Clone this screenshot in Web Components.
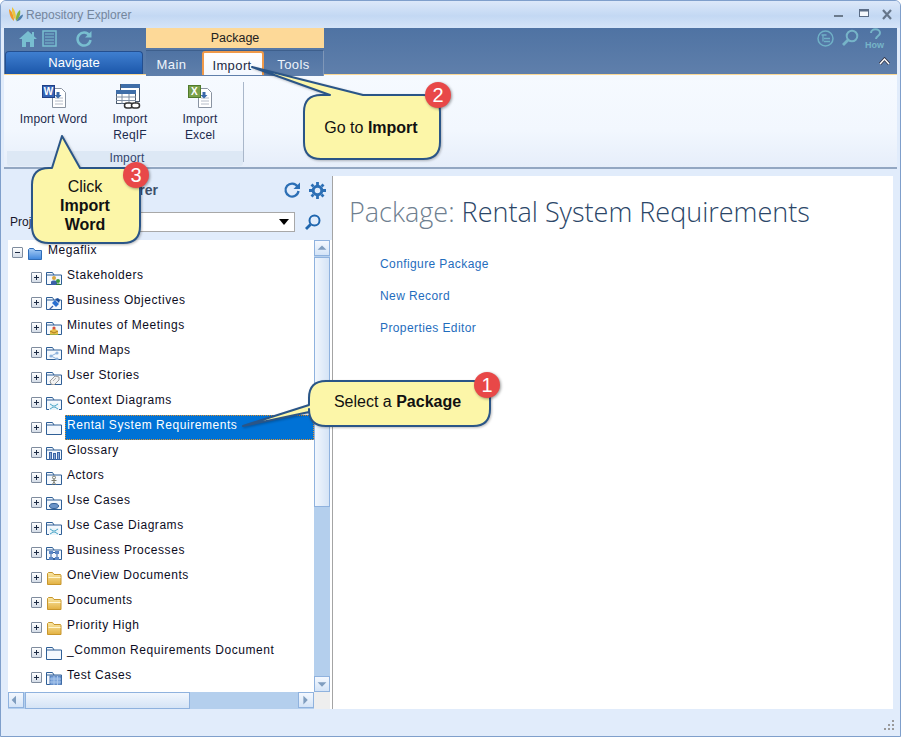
<!DOCTYPE html>
<html>
<head>
<meta charset="utf-8">
<title>Repository Explorer</title>
<style>
  html, body { margin: 0; padding: 0; background: #fff; }
  body { font-family: "Liberation Sans", Arial, sans-serif; font-size: 12px; }
</style>
</head>
<body>
<app-window>
  <title-bar></title-bar>
  <ribbon-header></ribbon-header>
  <ribbon-panel></ribbon-panel>
  <main-area>
    <explorer-pane slot="left"></explorer-pane>
    <package-page slot="right"></package-page>
  </main-area>
  <status-strip></status-strip>
  <call-out x="309" y="381" w="181" h="45" side="left" a="24" b="31" tx="243" ty="426" bx="165" by="-9" pad="0 4px 4px 0" n="1">Select a <b>Package</b></call-out>
  <call-out x="304" y="95" w="136" h="64" side="top" a="26" b="59" tx="252" ty="67" bx="121" by="-13" pad="0 2px 0 0" n="2">Go to <b>Import</b></call-out>
  <call-out x="32" y="168" w="108" h="75" side="top" a="20" b="48" tx="62" ty="136" bx="91" by="-6" pad="0 2px 0 0" n="3">Click<br><b>Import<br>Word</b></call-out>
</app-window>

<script>
/* Small glyphs drawn on a 16x16 grid, placed over the folder outline */
const FOLDER_GLYPHS = {
  people: '<circle cx="8" cy="8" r="2" fill="#d9a63c"/><path d="M5 15v-3c0-2 6-2 6 0v3z" fill="#3b5fa8"/><circle cx="12" cy="11" r="2" fill="#3c9a3c"/><path d="M10 15c0-2 4-2 5 0z" fill="#2f7d2f"/>',
  pin: '<path d="M3 15l4-4" stroke="#3b5fa8" stroke-width="1.2"/><path d="M6 8l3-3 4 4-3 3z" fill="#2a6fd0"/><path d="M9 4l3-1 2 2-1 3z" fill="#1d4f9c"/>',
  mail: '<path d="M4 15v-4l4-3 4 3v4z" fill="#e8c04a"/><path d="M4 11l4 2 4-2" stroke="#a87a20" fill="none"/><circle cx="8" cy="8" r="1.6" fill="#d8503c"/><path d="M3 15h10" stroke="#5a9a3c"/>',
  mind: '<circle cx="5" cy="11" r="1.6" fill="#8fb3dd"/><circle cx="11" cy="8" r="1.6" fill="#8fb3dd"/><circle cx="11" cy="14" r="1.6" fill="#8fb3dd"/><path d="M5 11l6-3M5 11l6 3" stroke="#8fb3dd"/>',
  story: '<path d="M5 14l-1-3 5-5 4 1 0 3-5 5z" fill="#f2f2f2" stroke="#9a9a9a"/><path d="M7 11l3-3" stroke="#b0b0b0"/>',
  context: '<path d="M3 8h10v7H3z" fill="#eaf4fa"/><path d="M4 9l8 5M12 9l-8 5" stroke="#4aa6c8"/><circle cx="8" cy="11.500" r="1.500" fill="#8cc6dc"/>',
  glossary: '<path d="M3 7h3v8H3zM7 8h3v7H7zM11 7h3v8h-3z" fill="#3b64a6"/><path d="M4.500 8v6M8.500 9v5M12.500 8v6" stroke="#8aa8d4"/>',
  actor: '<circle cx="8" cy="7.500" r="1.500" fill="none" stroke="#7a7a6a"/><path d="M8 9v3M5.500 10.500h5M8 12l-2 3M8 12l2 3" stroke="#7a7a6a" fill="none"/>',
  usecase: '<ellipse cx="8" cy="11" rx="4.500" ry="2.500" fill="#6b94c8" stroke="#2f5d96"/>',
  process: '<rect x="3" y="6" width="4" height="3" fill="#5b86c4"/><rect x="9" y="6" width="4" height="3" fill="#5b86c4"/><rect x="3" y="12" width="4" height="3" fill="#5b86c4"/><rect x="9" y="12" width="4" height="3" fill="#5b86c4"/><path d="M5 9v3M11 9v3M7 7.500h2M7 13.500h2" stroke="#2f5d96"/>',
  test: '<rect x="4" y="6" width="11" height="9" fill="#7ea6dc" stroke="#4f79b4"/><path d="M4 9h11M4 12h11M8 6v9M11.500 6v9" stroke="#a9c6ea"/>'
};

class FolderIcon extends HTMLElement {
  connectedCallback() {
    const kind = this.getAttribute('kind') || '';
    let art;
    if (kind === 'yellow') {
      art = `<defs><linearGradient id="y" x1="0" y1="0" x2="0" y2="1"><stop offset="0" stop-color="#fbe9a8"/><stop offset="1" stop-color="#e2b040"/></linearGradient></defs>
        <path d="M1.500 14.500v-11l1-1h4l1.500 2h6.500l.5 1v9z" fill="url(#y)" stroke="#c8962c"/>
        <path d="M2.500 7.500h12" stroke="#fff6d0"/>`;
    } else if (kind === 'root') {
      art = `<defs><linearGradient id="b" x1="0" y1="0" x2="0" y2="1"><stop offset="0" stop-color="#a9cdf5"/><stop offset="1" stop-color="#3f86dd"/></linearGradient></defs>
        <path d="M1.500 14.500v-10l1-1h4l1.500 2h6.500v9z" fill="url(#b)" stroke="#2f6cb8"/>`;
    } else {
      art = `<path d="M.500 14.500v-12h6l1.500 2.500h7.500v9.500z" fill="#f4f8fd" stroke="#2f5f96"/>
        <path d="M.500 5h7.500" stroke="#2f5f96"/>${FOLDER_GLYPHS[kind] || ''}`;
    }
    this.attachShadow({ mode: 'open' }).innerHTML = `
      <style>:host { display: block; width: 16px; height: 15px; } svg { display: block; }</style>
      <svg width="16" height="15" viewBox="0 0 16 15">${art}</svg>`;
  }
}
customElements.define('folder-icon', FolderIcon);

class AppWindow extends HTMLElement {
  constructor() {
    super();
    this.attachShadow({ mode: 'open' }).innerHTML = `
      <style>
        :host {
          display: flex; flex-direction: column; position: relative; box-sizing: border-box;
          width: 901px; height: 737px; padding: 0 3px 1px; overflow: hidden;
          background: #e1ecfb; border: 1px solid #7f9fcb; border-radius: 6px 6px 0 0;
          font-family: "Liberation Sans", Arial, sans-serif;
        }
      </style>
      <slot></slot>`;
  }
}
customElements.define('app-window', AppWindow);

class TitleBar extends HTMLElement {
  constructor() {
    super();
    this.attachShadow({ mode: 'open' }).innerHTML = `
      <style>
        :host {
          display: flex; align-items: center; height: 27px; flex: none; margin: 0 -3px; padding: 0 4px 0 7px;
          background: linear-gradient(#dce8f9, #c3d8f3 55%, #d5e4f8); color: #74869d; font-size: 12px;
        }
        .name { margin-left: 2px; flex: 1; }
        .btn { display: block; margin-left: 8px; }
        .up { position: relative; top: -2px; }
      </style>
      <svg width="16" height="17" viewBox="0 0 16 17">
        <path d="M1 3c0 5 2 10 5 12 0-5-2-10-5-12z" fill="#f0982c"/>
        <path d="M4 1c-.5 5 1 10 3.500 13 1-5-.5-10-3.500-13z" fill="#eec43c"/>
        <path d="M8 15c-.5-4 1-9 4-11 1 4-1 9-4 11z" fill="#84b23c"/>
        <path d="M8.500 15.500c1-3 3.500-6 6.500-7 0 3-3 6-6.500 7z" fill="#4f7fae"/>
      </svg>
      <span class="name">Repository Explorer</span>
      <svg class="btn up" width="16" height="16" viewBox="0 0 16 16"><path d="M2 11h9" stroke="#6b7a8c" stroke-width="2"/></svg>
      <svg class="btn up" width="16" height="16" viewBox="0 0 16 16"><rect x="3.500" y="4.500" width="9" height="7" fill="#f4f8fd" stroke="#5a6c86"/><path d="M3 5.500h10" stroke="#5a6c86" stroke-width="2"/></svg>
      <svg class="btn" width="16" height="16" viewBox="0 0 16 16"><path d="M3 3l8 9M11 3l-8 9" stroke="#66768a" stroke-width="2.200"/></svg>`;
  }
}
customElements.define('title-bar', TitleBar);

class RibbonHeader extends HTMLElement {
  constructor() {
    super();
    this.attachShadow({ mode: 'open' }).innerHTML = `
      <style>
        :host {
          display: flex; height: 47px; flex: none; box-sizing: border-box; position: relative;
          background: linear-gradient(#4f73a3, #5f7fab); border-bottom: 1px solid #fbd894;
          font-size: 12px;
        }
        .nav-side { width: 142px; display: flex; flex-direction: column; }
        .quick { height: 23px; display: flex; align-items: center; padding: 0 0 2px 15px; box-sizing: border-box; gap: 5px; }
        .quick svg:last-child { margin-left: 12px; }
        .navigate {
          height: 23px; margin: 0 3px 0 1px; box-sizing: border-box; text-align: center; line-height: 21px;
          background: linear-gradient(#3f7fd0, #1c57aa); border: 1px solid #244f8f; border-bottom: 0;
          border-radius: 4px 4px 0 0; color: #fff; font-size: 13px;
        }
        .context { width: 178px; display: flex; flex-direction: column; }
        .context-title {
          height: 20px; background: #fdd998; color: #222; text-align: center; line-height: 20px; font-size: 12.500px;
        }
        .tabs { display: flex; flex: 1; padding-left: 1px; border-right: 1px solid #7f97b8; background: linear-gradient(#4f73a3, #5f7fab); margin-top: 2px; border-top: 1px solid #3e5f8c; font-size: 13px; letter-spacing: .4px; }
        .tab { color: #eef4fb; text-align: center; line-height: 22px; padding-top: 3px; box-sizing: border-box; }
        .tab.main { width: 55px; padding-right: 6px; }
        .tab.tools { width: 59px; }
        .tab.active {
          width: 62px; color: #1c2a44; background: linear-gradient(#fff, #f3f8ff); height: 24px; line-height: 21px; padding: 2px 2px 0 0;
          border: 2px solid #f09a4a; border-bottom: 0; border-radius: 3px 3px 0 0;
        }
        .right { flex: 1; display: flex; flex-direction: column; align-items: flex-end; padding-right: 6px; }
        .icons { height: 20px; display: flex; align-items: center; gap: 7px; padding-right: 7px; }
        .how { position: relative; width: 18px; height: 20px; }
        .how span { position: absolute; left: -1px; bottom: -2px; font-size: 9px; color: #76b4c8; font-weight: bold; }
        .collapse { margin-top: 9px; margin-right: 1px; }
      </style>
      <div class="nav-side">
        <div class="quick">
          <svg width="18" height="18" viewBox="0 0 18 18"><path d="M9 1L0 9h3v8h4v-5h4v5h4V9h3l-3-2.700V2h-2v2.500z" fill="#78bed0"/></svg>
          <svg width="16" height="17" viewBox="0 0 16 17"><rect x="1" y="1" width="13" height="15" fill="none" stroke="#78bed0" stroke-width="1.500"/><path d="M3 4h9M3 7h9M3 10h9M3 13h9" stroke="#78bed0"/></svg>
          <svg width="18" height="18" viewBox="0 0 18 18"><path d="M14.500 5.500A6.500 6.500 0 1 0 15.500 10" fill="none" stroke="#78bed0" stroke-width="2.500"/><path d="M16.500 1v6.500H10z" fill="#78bed0"/></svg>
        </div>
        <div class="navigate">Navigate</div>
      </div>
      <div class="context">
        <div class="context-title">Package</div>
        <div class="tabs">
          <div class="tab main">Main</div>
          <div class="tab active">Import</div>
          <div class="tab tools">Tools</div>
        </div>
      </div>
      <div class="right">
        <div class="icons">
          <svg width="17" height="17" viewBox="0 0 17 17"><circle cx="8.500" cy="8.500" r="7.500" fill="none" stroke="#6fb0c6" stroke-width="1.500"/><path d="M4.500 5h5M7 8.500h6M7 11.500h6M6 5v6.500" stroke="#6fb0c6" stroke-width="1.300" fill="none"/></svg>
          <svg width="18" height="18" viewBox="0 0 18 18"><circle cx="11" cy="7" r="5.300" fill="none" stroke="#76b4c8" stroke-width="2"/><path d="M7 11l-5 5" stroke="#76b4c8" stroke-width="2.800"/></svg>
          <div class="how">
            <svg width="18" height="14" viewBox="0 0 18 14"><path d="M5 5c0-5 9-5 9 0 0 3-4 3-4 6" fill="none" stroke="#76b4c8" stroke-width="2"/></svg>
            <span>How</span>
          </div>
        </div>
        <svg class="collapse" width="11" height="9" viewBox="0 0 11 9"><path d="M1 7l4.500-5L10 7" fill="none" stroke="#334" stroke-width="3"/><path d="M1 7l4.500-5L10 7" fill="none" stroke="#fff" stroke-width="1.500"/></svg>
      </div>`;
  }
}
customElements.define('ribbon-header', RibbonHeader);

class RibbonButton extends HTMLElement {
  constructor() {
    super();
    this.attachShadow({ mode: 'open' }).innerHTML = `
      <style>
        :host { display: flex; flex-direction: column; align-items: center; text-align: center; font-size: 12px; line-height: 16px; color: #1d2b4d; letter-spacing: .15px; }
        ::slotted(svg) { display: block; margin-bottom: 2px; }
      </style>
      <slot name="icon"></slot><slot></slot>`;
  }
}
customElements.define('ribbon-button', RibbonButton);

class RibbonPanel extends HTMLElement {
  constructor() {
    super();
    const docArt = (badge, letter, edge) => `
      <path d="M13.500 4.500h9l4 4v15h-13z" fill="#fff" stroke="#8a94a2"/>
      <path d="M16 14h8M16 17h8M16 20h8" stroke="#b5bcc8"/>
      <path d="M17.500 8h3v3h2L19 14.500 15.500 11h2z" fill="#3a68a8"/>
      <rect x="3.500" y="1.500" width="12" height="12" fill="${badge}" stroke="${edge}"/>
      <text x="9.500" y="11" font-size="10" font-weight="bold" fill="#fff" text-anchor="middle" font-family="Liberation Sans">${letter}</text>`;
    this.attachShadow({ mode: 'open' }).innerHTML = `
      <style>
        :host {
          display: flex; height: 94px; flex: none; box-sizing: border-box;
          background: linear-gradient(#f6faff, #f2f7fe 60%, #e6eefa);
          border-bottom: 2px solid #93a7c2; padding: 6px 0 1px 3px;
        }
        .group { width: 236px; display: flex; flex-direction: column; }
        .buttons { flex: 1; display: flex; padding-top: 3px; margin-left: -1px; }
        .w1 { width: 95px; } .w2 { width: 58px; } .w3 { width: 82px; }
        .label { height: 15px; background: #dde8f5; padding-left: 4px; text-align: center; line-height: 15px; font-size: 12px; letter-spacing: .2px; color: #33456e; border-radius: 0 0 3px 3px; }
        .sep { width: 1px; background: #a9b7ca; margin: 1px 0 4px; }
      </style>
      <div class="group">
        <div class="buttons">
          <ribbon-button class="w1">
            <svg slot="icon" width="30" height="25" viewBox="0 0 30 25">${docArt('#3563b4', 'W', '#1f3f86')}</svg>Import Word
          </ribbon-button>
          <ribbon-button class="w2">
            <svg slot="icon" width="30" height="25" viewBox="0 0 30 25">
              <rect x="5.500" y=".500" width="19" height="17" fill="#fff" stroke="#4a5a6e"/>
              <rect x="6" y="0" width="19" height="4" fill="#3f6ea8"/>
              <rect x="1.500" y="6.500" width="19" height="13" fill="#fff" stroke="#4a5a6e"/>
              <rect x="1" y="6" width="20" height="4" fill="#3f6ea8"/>
              <path d="M1 13h20M1 16.500h20M7 10v10M14 10v10" stroke="#7f8ea2"/>
              <rect x="9.500" y="19" width="8" height="5" rx="2.500" fill="#fff" stroke="#333" stroke-width="1.500"/>
              <rect x="16.500" y="19" width="8" height="5" rx="2.500" fill="#fff" stroke="#333" stroke-width="1.500"/>
            </svg>Import<br>ReqIF
          </ribbon-button>
          <ribbon-button class="w3">
            <svg slot="icon" width="30" height="25" viewBox="0 0 30 25">${docArt('#7aa04a', 'X', '#4f7a2c')}</svg>Import<br>Excel
          </ribbon-button>
        </div>
        <div class="label">Import</div>
      </div>
      <div class="sep"></div>`;
  }
}
customElements.define('ribbon-panel', RibbonPanel);

class MainArea extends HTMLElement {
  constructor() {
    super();
    this.attachShadow({ mode: 'open' }).innerHTML = `
      <style>
        :host { display: flex; flex: 1; min-height: 0; padding-top: 7px; }
        ::slotted([slot=left]) { width: 328px; flex: none; }
        ::slotted([slot=right]) { flex: 1; margin-right: 4px; }
      </style>
      <slot name="left"></slot><slot name="right"></slot>`;
  }
}
customElements.define('main-area', MainArea);

class ScrollBar extends HTMLElement {
  connectedCallback() {
    const horizontal = this.getAttribute('dir') === 'h';
    const arrows = horizontal
      ? ['M8 3v10L3 8z', 'M5 3v10l5-5z']
      : ['M3 10h10L8 5z', 'M3 6h10l-5 5z'];
    this.attachShadow({ mode: 'open' }).innerHTML = `
      <style>
        :host { display: flex; flex-direction: ${horizontal ? 'row' : 'column'}; background: #b4cfed; box-sizing: border-box; }
        .arrow {
          flex: none; width: 16px; height: 16px; box-sizing: border-box; border: 1px solid #8fb2de;
          background: linear-gradient(#f4f8fe, #d4e4f7); display: block;
        }
        .thumb {
          box-sizing: border-box; border: 1px solid #8fb2de; background: linear-gradient(${horizontal ? '#f1f6fd, #d5e4f6' : '90deg, #f1f6fd, #d5e4f6'});
          ${horizontal ? 'width: 165px; margin-left: 1px;' : 'height: 250px; margin-top: 1px;'}
        }
        .fill { flex: 1; }
        svg { display: block; }
      </style>
      <div class="arrow"><svg width="14" height="14" viewBox="0 0 16 16"><path d="${arrows[0]}" fill="#7f9dbf"/></svg></div>
      <div class="thumb"></div>
      <div class="fill"></div>
      <div class="arrow"><svg width="14" height="14" viewBox="0 0 16 16"><path d="${arrows[1]}" fill="#7f9dbf"/></svg></div>`;
  }
}
customElements.define('scroll-bar', ScrollBar);

class TreeRow extends HTMLElement {
  connectedCallback() {
    const level = this.getAttribute('level') || '1';
    const open = this.hasAttribute('open');
    const sel = this.hasAttribute('selected');
    this.attachShadow({ mode: 'open' }).innerHTML = `
      <style>
        :host { display: flex; align-items: center; height: 25px; padding-left: ${level === '0' ? 4 : 23}px; color: #0c0c1e; font-size: 12px; letter-spacing: .55px; }
        .box {
          width: 11px; height: 11px; box-sizing: border-box; border: 1px solid #7f8c9e; border-radius: 1px;
          background: linear-gradient(#fff, #d5dde8); position: relative; margin-right: 4px; flex: none;
        }
        .box::before { content: ""; position: absolute; left: 2px; right: 2px; top: 4px; height: 1px; background: #1d2b44; }
        .box.plus::after { content: ""; position: absolute; top: 2px; bottom: 2px; left: 4px; width: 1px; background: #1d2b44; }
        folder-icon { flex: none; }
        .text { flex: 1; height: 25px; line-height: 21px; box-sizing: border-box; padding-left: 2px; margin-left: 3px; white-space: nowrap; }
        .text.sel { background: #0072d6; color: #fff; outline: 1px dotted #e0902c; outline-offset: -1px; }
      </style>
      <span class="box ${open ? '' : 'plus'}"></span>
      <folder-icon kind="${this.getAttribute('kind') || ''}"></folder-icon>
      <span class="text ${sel ? 'sel' : ''}"><slot></slot></span>`;
  }
}
customElements.define('tree-row', TreeRow);

class ExplorerPane extends HTMLElement {
  constructor() {
    super();
    const rows = [
      ['Stakeholders', 'people'], ['Business Objectives', 'pin'], ['Minutes of Meetings', 'mail'],
      ['Mind Maps', 'mind'], ['User Stories', 'story'], ['Context Diagrams', 'context'],
      ['Rental System Requirements', '', true], ['Glossary', 'glossary'], ['Actors', 'actor'],
      ['Use Cases', 'usecase'], ['Use Case Diagrams', 'context'], ['Business Processes', 'process'],
      ['OneView Documents', 'yellow'], ['Documents', 'yellow'], ['Priority High', 'yellow'],
      ['_Common Requirements Document', ''], ['Test Cases', 'test']
    ];
    this.attachShadow({ mode: 'open' }).innerHTML = `
      <style>
        :host { display: flex; flex-direction: column; padding-left: 4px; box-sizing: border-box; font-size: 12px; }
        .head { height: 36px; flex: none; display: flex; align-items: center; padding: 0 6px 8px 0; box-sizing: border-box; }
        .head b { width: 150px; text-align: right; font-size: 14px; color: #3d4f6a; }
        .head .tools { margin-left: auto; display: flex; gap: 8px; align-items: center; }
        .filter { height: 20px; flex: none; display: flex; align-items: center; margin-bottom: 8px; }
        .filter label { width: 62px; padding-left: 2px; color: #16162a; box-sizing: border-box; }
        .combo { width: 225px; height: 20px; box-sizing: border-box; background: #fff; border: 1px solid #a8a8a8; display: flex; align-items: center; justify-content: flex-end; padding-right: 5px; }
        .combo i { width: 0; height: 0; border: 5px solid transparent; border-top: 6px solid #000; border-bottom: 0; }
        .filter svg { margin-left: 9px; }
        .tree { flex: 1; min-height: 0; display: grid; grid-template-columns: 1fr 16px; grid-template-rows: 1fr 17px; border-right: 2px solid #fff; }
        .rows { background: #fff; overflow: hidden; }
        .corner { background: #eeeeee; }
      </style>
      <div class="head">
        <b>Explorer</b>
        <div class="tools">
          <svg width="18" height="18" viewBox="0 0 18 18"><path d="M14.500 5.500A6.500 6.500 0 1 0 15.500 10" fill="none" stroke="#2c6fb5" stroke-width="2.300"/><path d="M17 1.500V8h-6.500z" fill="#2c6fb5"/></svg>
          <svg width="17" height="17" viewBox="0 0 17 17"><circle cx="8.500" cy="8.500" r="4.300" fill="none" stroke="#2c6fb5" stroke-width="3"/><path d="M8.500 0v3M8.500 14v3M0 8.500h3M14 8.500h3M2.500 2.500l2 2M12.500 12.500l2 2M14.500 2.500l-2 2M4.500 12.500l-2 2" stroke="#2c6fb5" stroke-width="2.800"/></svg>
        </div>
      </div>
      <div class="filter">
        <label>Project:</label>
        <div class="combo"><i></i></div>
        <svg width="17" height="17" viewBox="0 0 17 17"><circle cx="10.500" cy="6.500" r="5" fill="none" stroke="#1f66ae" stroke-width="2"/><path d="M6.500 10.500L2 15" stroke="#1f66ae" stroke-width="2.800"/></svg>
      </div>
      <div class="tree">
        <div class="rows">
          <tree-row level="0" open kind="root">Megaflix</tree-row>
          ${rows.map(r => `<tree-row kind="${r[1]}" ${r[2] ? 'selected' : ''}>${r[0]}</tree-row>`).join('')}
        </div>
        <scroll-bar></scroll-bar>
        <scroll-bar dir="h"></scroll-bar>
        <div class="corner"></div>
      </div>`;
  }
}
customElements.define('explorer-pane', ExplorerPane);

class PackagePage extends HTMLElement {
  constructor() {
    super();
    this.attachShadow({ mode: 'open' }).innerHTML = `
      <style>
        :host { display: block; background: #fff; border-left: 1px solid #a4a4a4; box-sizing: border-box; padding: 19px 16px 0; }
        h1 { margin: 0 0 27px; font: 300 27px/34px "Open Sans", sans-serif; color: #2b4668; white-space: nowrap; }
        h1 span { color: #6f7f90; }
        a { display: block; margin-left: 31px; height: 32px; color: #1f6dbd; text-decoration: none; font-size: 12px; letter-spacing: .4px; line-height: 16px; }
      </style>
      <h1><span>Package:</span> Rental System Requirements</h1>
      <a>Configure Package</a>
      <a>New Record</a>
      <a>Properties Editor</a>`;
  }
}
customElements.define('package-page', PackagePage);

class StatusStrip extends HTMLElement {
  constructor() {
    super();
    this.attachShadow({ mode: 'open' }).innerHTML = `
      <style>
        :host { display: flex; height: 26px; flex: none; justify-content: flex-end; align-items: flex-end; padding: 0 2px 4px 0; box-sizing: border-box; }
      </style>
      <svg width="11" height="11" viewBox="0 0 11 11" fill="#9a9a9a">
        <rect x="8" y="0" width="2" height="2"/><rect x="4" y="4" width="2" height="2"/><rect x="8" y="4" width="2" height="2"/>
        <rect x="0" y="8" width="2" height="2"/><rect x="4" y="8" width="2" height="2"/><rect x="8" y="8" width="2" height="2"/>
      </svg>`;
  }
}
customElements.define('status-strip', StatusStrip);

/* Balloon with a pointing tail. x/y/w/h are the body box on the page, a/b where the tail
   leaves the body along its side, tx/ty the tail tip on the page, bx/by the badge offset. */
class CallOut extends HTMLElement {
  connectedCallback() {
    const n = name => parseFloat(this.getAttribute(name));
    const [x, y, w, h, a, b] = ['x', 'y', 'w', 'h', 'a', 'b'].map(n);
    const tx = n('tx') - x, ty = n('ty') - y, r = 17;
    const tail = `L${tx} ${ty}`;
    let d = `M${r} 0`;
    if (this.getAttribute('side') === 'top') d += `L${a} 0${tail}L${b} 0`;
    d += `L${w - r} 0Q${w} 0 ${w} ${r}L${w} ${h - r}Q${w} ${h} ${w - r} ${h}L${r} ${h}Q0 ${h} 0 ${h - r}`;
    if (this.getAttribute('side') === 'left') d += `L0 ${b}${tail}L0 ${a}`;
    d += `L0 ${r}Q0 0 ${r} 0Z`;
    this.attachShadow({ mode: 'open' }).innerHTML = `
      <style>
        :host {
          position: absolute; left: ${x - 1}px; top: ${y - 1}px; width: ${w}px; height: ${h}px;
          font-family: "Liberation Sans", Arial, sans-serif; font-size: 16px; line-height: 19px; color: #111;
        }
        svg { position: absolute; left: 0; top: 0; overflow: visible; filter: drop-shadow(1px 1px 1px rgba(0,0,0,.25)); }
        .text { position: absolute; inset: 0; box-sizing: border-box; padding: ${this.getAttribute('pad') || 0}; display: flex; align-items: center; justify-content: center; text-align: center; }
        .badge {
          position: absolute; left: ${n('bx')}px; top: ${n('by')}px; width: 26px; height: 26px; border-radius: 50%;
          background: #e84848; color: #fff; font-size: 20px; line-height: 26px; text-align: center;
          box-shadow: 1px 1px 3px rgba(0,0,0,.4);
        }
      </style>
      <svg width="${w}" height="${h}"><path d="${d}" fill="#fcf6a8" stroke="#2a5587" stroke-width="2" stroke-linejoin="round"/></svg>
      <div class="text"><span><slot></slot></span></div>
      <div class="badge">${this.getAttribute('n')}</div>`;
  }
}
customElements.define('call-out', CallOut);
</script>
</body>
</html>
